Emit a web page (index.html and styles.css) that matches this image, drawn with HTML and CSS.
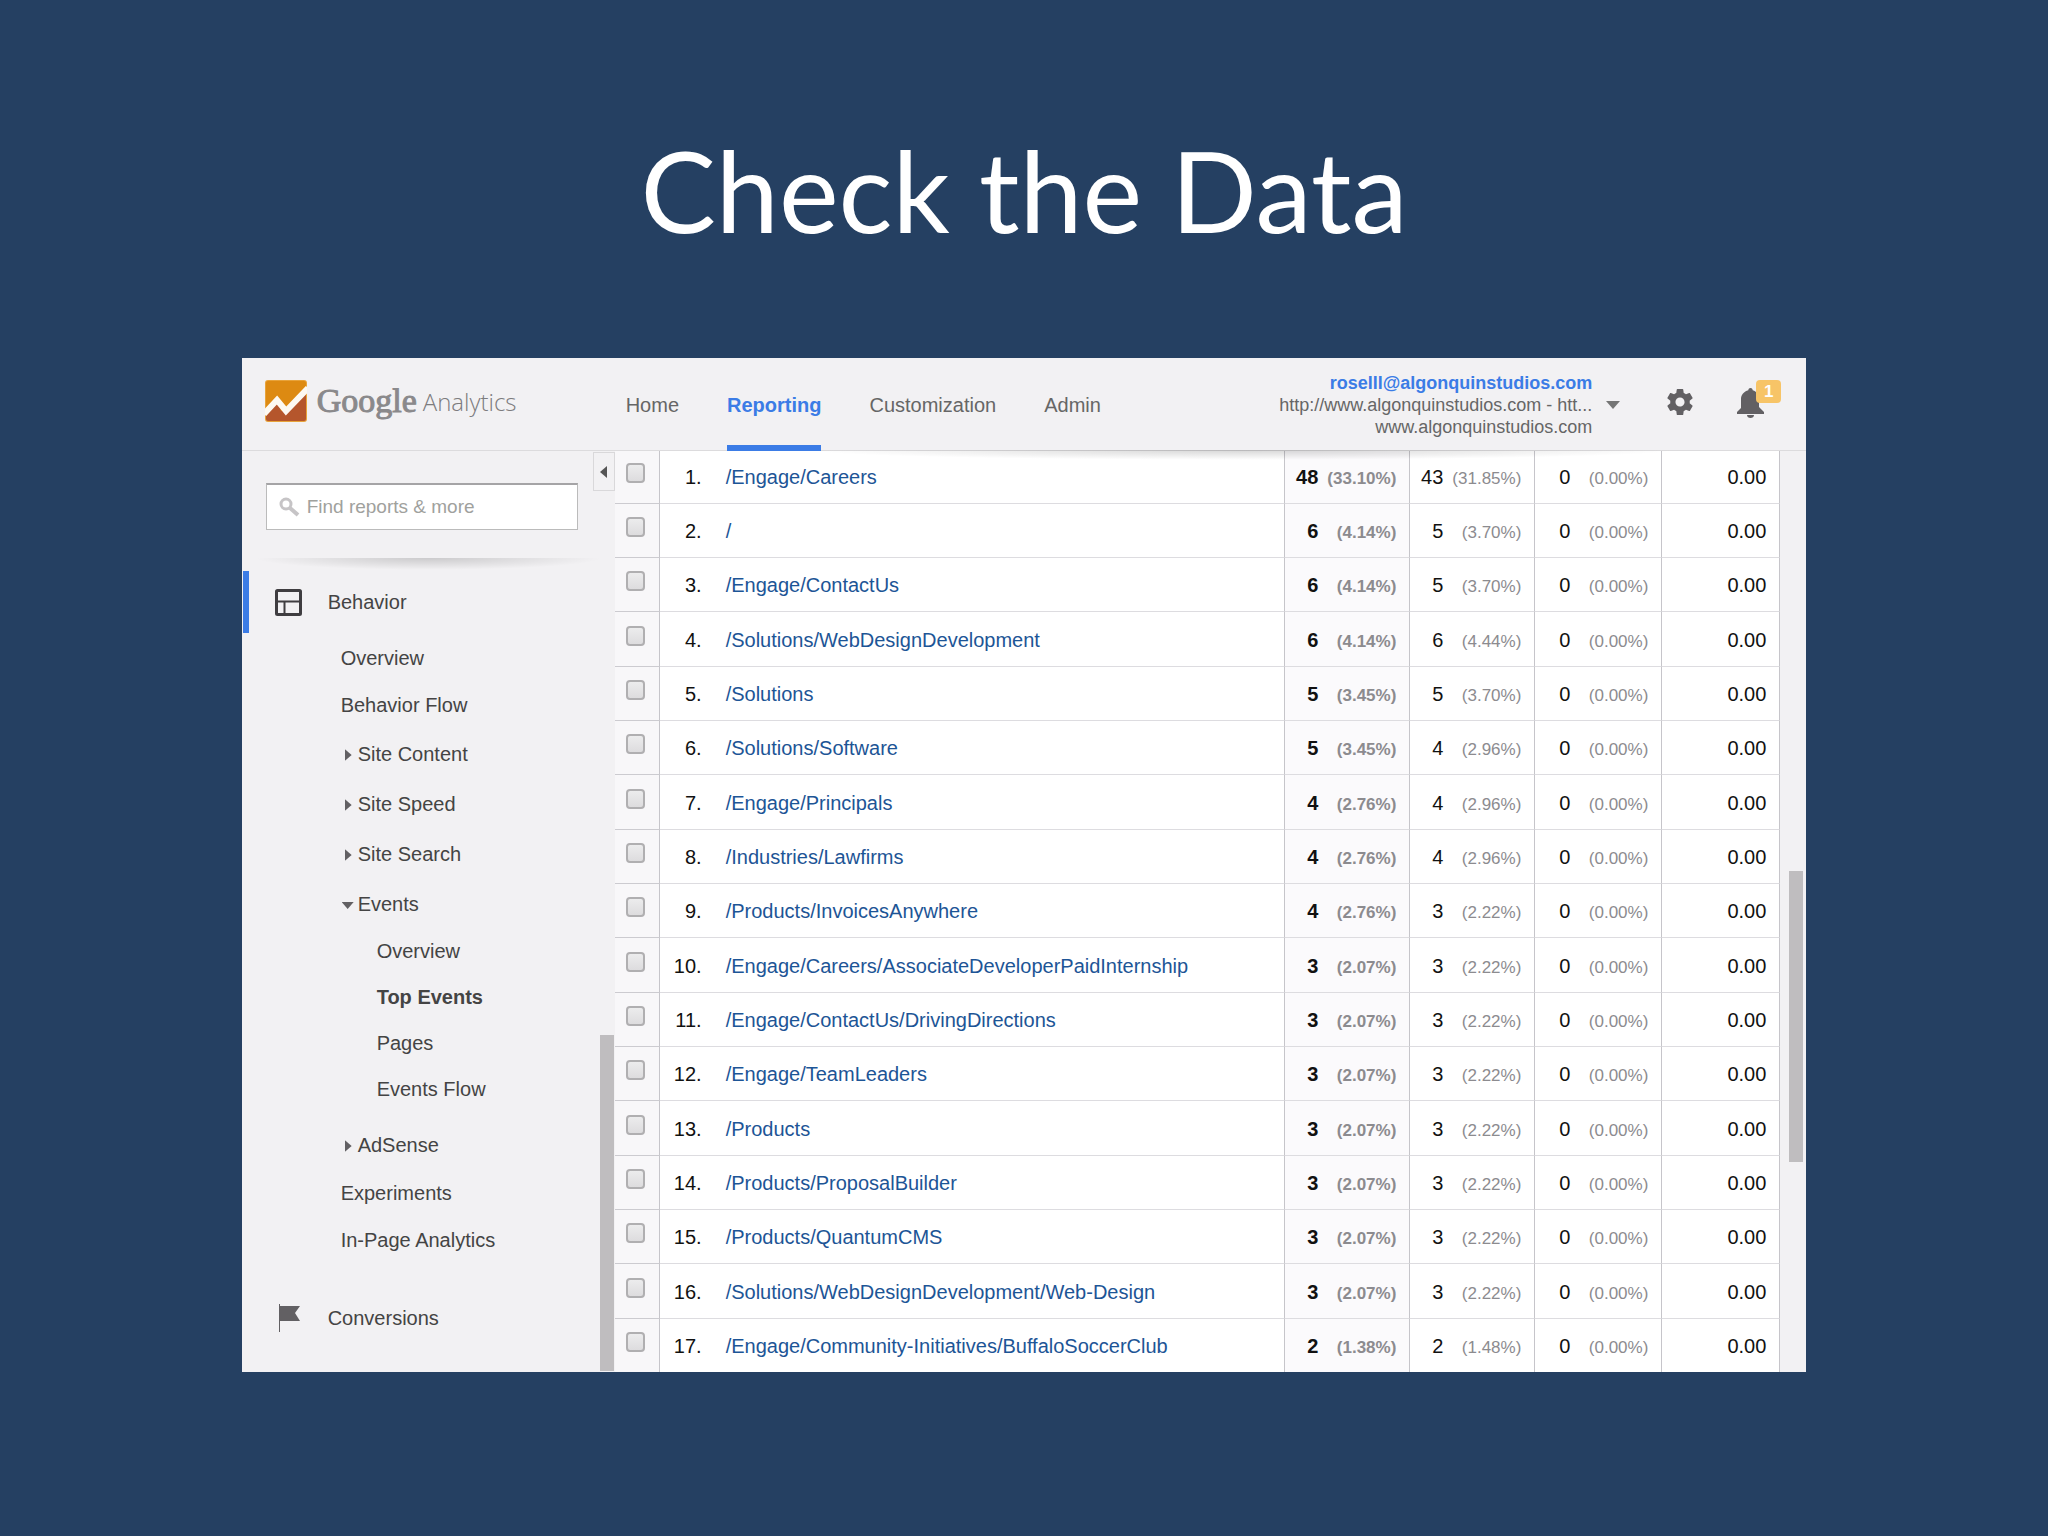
FILE: index.html
```html
<!DOCTYPE html>
<html lang="en">
<head>
<meta charset="UTF-8" />
<meta name="viewport" content="width=device-width, initial-scale=1" />
<title>Check the Data</title>
<link rel="stylesheet" href="styles.css">
</head>
<body>
  <main class="slide">
    <h1>Check the Data</h1>

    <div class="window">
      <header class="topbar">
        <a href="#" class="logo">
          <svg class="logo-mark" viewBox="0 0 42 42" aria-hidden="true">
            <rect width="42" height="42" rx="3" fill="#e8a33a"/>
            <path d="M1 3a2 2 0 0 1 2-2h36a2 2 0 0 1 2 2v36H1z" fill="#dd8a12"/>
            <path d="M1 36L12 22l9 11L41 13v26a2 2 0 0 1-2 2H3a2 2 0 0 1-2-2z" fill="#b5562c"/>
            <path d="M14 22l2 9 6-4z" fill="#e8940f"/>
            <path d="M-1 34L12 20l9 11L43 8" fill="none" stroke="#fdf9f2" stroke-width="6"/>
          </svg>
          <span class="logo-google">Google</span>
          <span class="logo-product">Analytics</span>
        </a>
        <nav class="tabs">
          <a href="#">Home</a>
          <a href="#" class="active">Reporting</a>
          <a href="#">Customization</a>
          <a href="#">Admin</a>
        </nav>
        <button type="button" class="account">
          <span class="account-text">
            <span class="email">roselll@algonquinstudios.com</span>
            <span>http://www.algonquinstudios.com - htt...</span>
            <span>www.algonquinstudios.com</span>
          </span>
          <svg class="caret" viewBox="0 0 14 8" aria-hidden="true"><path d="M0 0h14L7 8z" fill="#757575"/></svg>
        </button>
        <button type="button" class="icon-btn" aria-label="Settings">
          <svg width="26" height="26" viewBox="2 2 20 20" aria-hidden="true">
            <path fill="#626063" d="M19.43 12.98c.04-.32.07-.64.07-.98s-.03-.66-.07-.98l2.11-1.65c.19-.15.24-.42.12-.64l-2-3.46c-.12-.22-.39-.3-.61-.22l-2.49 1c-.52-.4-1.08-.73-1.69-.98l-.38-2.65C14.46 2.18 14.25 2 14 2h-4c-.25 0-.46.18-.49.42l-.38 2.65c-.61.25-1.17.59-1.69.98l-2.49-1c-.23-.09-.49 0-.61.22l-2 3.46c-.13.22-.07.49.12.64l2.11 1.65c-.04.32-.07.65-.07.98s.03.66.07.98l-2.11 1.65c-.19.15-.24.42-.12.64l2 3.46c.12.22.39.3.61.22l2.49-1c.52.4 1.08.73 1.69.98l.38 2.65c.03.24.24.42.49.42h4c.25 0 .46-.18.49-.42l.38-2.65c.61-.25 1.17-.59 1.69-.98l2.49 1c.23.09.49 0 .61-.22l2-3.46c.12-.22.07-.49-.12-.64l-2.11-1.65zM12 15.5c-1.93 0-3.5-1.57-3.5-3.5s1.57-3.5 3.5-3.5 3.5 1.57 3.5 3.5-1.57 3.5-3.5 3.5z"/>
          </svg>
        </button>
        <button type="button" class="icon-btn bell" aria-label="Notifications">
          <svg width="27" height="30" viewBox="0 0 27 30" aria-hidden="true">
            <path fill="#626063" d="M13.500 0c1.500 0 2.200 1 2.200 2.300 4 1.200 6.300 4.400 6.300 8.700v8l5 5v2H0v-2l4-4v-9c0-4.300 3-7.500 7.300-8.700C11.300 1 12 0 13.500 0zM10 27h7c0 2-1.500 3-3.500 3S10 29 10 27z"/>
          </svg>
          <span class="badge">1</span>
        </button>
      </header>

      <div class="content">
        <aside class="sidebar">
          <button type="button" class="collapse" aria-label="Collapse sidebar">
            <svg width="7" height="12" viewBox="0 0 7 12" aria-hidden="true"><path d="M7 0v12L0 6z" fill="#555"/></svg>
          </button>
          <label class="search">
            <svg width="21" height="20" viewBox="0 0 21 20" aria-hidden="true">
              <circle cx="7" cy="7" r="5" fill="none" stroke="#c6c4c6" stroke-width="3"/>
              <path d="M11 11l8 7" stroke="#c6c4c6" stroke-width="4"/>
            </svg>
            <input type="text" placeholder="Find reports &amp; more" aria-label="Find reports and more" />
          </label>
          <div class="divider"></div>

          <nav class="menu">
            <a href="#" class="section current">
              <svg width="27" height="27" viewBox="0 0 27 27" aria-hidden="true">
                <rect x="1.500" y="1.500" width="24" height="24" rx="1" fill="none" stroke="#3f3d40" stroke-width="3"/>
                <path d="M2 12.500h23M9.500 12v13" stroke="#3f3d40" stroke-width="2"/>
              </svg>
              Behavior
            </a>
            <ul>
              <li><a href="#">Overview</a></li>
              <li><a href="#">Behavior Flow</a></li>
              <li><a href="#" class="group">Site Content</a></li>
              <li><a href="#" class="group">Site Speed</a></li>
              <li><a href="#" class="group">Site Search</a></li>
              <li>
                <a href="#" class="group open">Events</a>
                <ul class="submenu">
                  <li><a href="#">Overview</a></li>
                  <li><a href="#" class="selected">Top Events</a></li>
                  <li><a href="#">Pages</a></li>
                  <li><a href="#">Events Flow</a></li>
                </ul>
              </li>
              <li><a href="#" class="group">AdSense</a></li>
              <li><a href="#">Experiments</a></li>
              <li><a href="#">In-Page Analytics</a></li>
            </ul>
            <a href="#" class="section">
              <svg width="27" height="28" viewBox="0 0 27 28" aria-hidden="true">
                <path d="M4.500 0v28" stroke="#626063"/>
                <path d="M4 2h21l-5 7 5 8H4z" fill="#626063"/>
              </svg>
              Conversions
            </a>
          </nav>
          <div class="thumb"></div>
        </aside>

        <div class="report">
          <table id="pagesTable">
            <colgroup>
              <col class="col-check">
              <col class="col-index">
              <col>
              <col class="col-total">
              <col class="col-unique">
              <col class="col-value">
              <col class="col-avg">
            </colgroup>
            <tbody>
              <!-- Populated by script.js -->
            </tbody>
          </table>
        </div>
        <div class="gutter"><div class="thumb"></div></div>
      </div>
    </div>
  </main>

<script src="script.js"></script>
</body>
</html>
```
FILE: styles.css
```css
body {
  margin: 0;
  background: #254062;
  font-family: "Liberation Sans", Arial, sans-serif;
  font-size: 20px;
  color: #111;
}
a { color: inherit; text-decoration: none; }
button {
  border: none;
  background: none;
  padding: 0;
  font: inherit;
  color: inherit;
  cursor: pointer;
}
ul { list-style: none; margin: 0; padding: 0; }
svg { display: block; flex-shrink: 0; }

.slide { padding: 122px 11.8%; }
h1 {
  margin: 0 0 102px;
  font-family: Lato, sans-serif;
  font-size: 113px;
  line-height: 134px;
  font-weight: 400;
  color: #fff;
  text-align: center;
}
.window {
  background: #f2f1f3;
  overflow: hidden;
}

/* top bar */
.topbar {
  position: relative;
  z-index: 1;
  display: flex;
  align-items: center;
  box-sizing: border-box;
  height: 93px;
  padding-right: 42px;
  background: #f2f1f3;
  border-bottom: 1px solid #dcdbdd;
}
.topbar::after {
  content: "";
  position: absolute;
  top: 100%;
  left: 36%;
  right: 8%;
  height: 10px;
  background: radial-gradient(ellipse at top, rgba(0, 0, 0, 0.16), transparent 70%);
  pointer-events: none;
}
.logo {
  display: flex;
  align-items: center;
  box-sizing: border-box;
  width: 384px;
  padding: 0 0 6px 23px;
  color: #8a898b;
}
.logo-mark { width: 42px; height: 42px; margin-right: 10px; }
.logo-google {
  font-family: "Liberation Serif", serif;
  font-size: 34px;
  -webkit-text-stroke: 1px #8a898b;
  margin-right: 6px;
}
.logo-product {
  font-family: "Open Sans", sans-serif;
  font-size: 24px;
  font-weight: 300;
  color: #7d7c7e;
}
.tabs {
  display: flex;
  align-self: stretch;
  gap: 48px;
  margin-right: auto;
  color: #666;
}
.tabs a {
  display: flex;
  align-items: center;
  padding-top: 8px;
  border-bottom: 6px solid transparent;
  margin-bottom: -1px;
}
.tabs .active {
  color: #3b7ce6;
  font-weight: bold;
  border-color: #3b7ce6;
}
.account {
  display: flex;
  align-items: center;
  gap: 14px;
  padding-top: 2px;
  font-size: 18px;
  line-height: 22px;
  color: #666;
  text-align: right;
}
.account-text { display: flex; flex-direction: column; }
.email { color: #3b7ce6; font-weight: bold; }
.caret { width: 14px; height: 8px; }
.icon-btn { margin: 0 0 5px 47px; }
.bell { position: relative; margin-left: 44px; margin-bottom: 2px; }
.badge {
  position: absolute;
  top: -8px;
  right: -17px;
  width: 25px;
  border-radius: 4px;
  background: #f7c467;
  color: #fff;
  font-size: 17px;
  line-height: 23px;
  font-weight: bold;
}

/* sidebar */
.content {
  display: flex;
  margin-top: -1px;
}
.sidebar {
  position: relative;
  flex: 0 0 373px;
  color: #444;
}
.collapse {
  position: absolute;
  top: 2px;
  right: 0;
  display: flex;
  align-items: center;
  justify-content: center;
  box-sizing: border-box;
  width: 22px;
  height: 39px;
  border: 1px solid #d9d8da;
}
.search {
  display: flex;
  align-items: center;
  gap: 7px;
  box-sizing: border-box;
  height: 47px;
  margin: 33px 37px 28px 24px;
  padding: 0 12px;
  background: #fff;
  border: 1px solid #bbb;
  border-top: 2px solid #a5a4a6;
}
.search input {
  flex: 1;
  min-width: 0;
  border: none;
  outline: none;
  padding: 0;
  background: none;
  font: inherit;
  font-size: 19px;
}
.search input::placeholder { color: #a0a19d; opacity: 1; }
.divider {
  height: 12px;
  margin: 0 12px;
  background: radial-gradient(ellipse at top, rgba(0, 0, 0, 0.16), transparent 70%);
}
.section {
  display: flex;
  align-items: center;
  gap: 26px;
  height: 62px;
  padding-left: 26px;
  margin: 23px 0 0 1px;
  border-left: 6px solid transparent;
}
.section.current {
  margin: 1px 0 2px 1px;
  border-color: #3b7ce6;
}
.menu li a {
  display: flex;
  align-items: center;
  line-height: 47px;
  padding-left: 99px;
}
.menu li .group {
  line-height: 50px;
  padding-left: 103px;
}
.group::before {
  content: "";
  width: 7px;
  height: 12px;
  margin-top: 2px;
  margin-right: 6px;
  background: #626063;
  clip-path: polygon(0 0, 100% 50%, 0 100%);
}
.group.open::before {
  width: 12px;
  height: 7px;
  margin: 3px 4px 0 -3px;
  clip-path: polygon(0 0, 100% 0, 50% 100%);
}
.menu .submenu { margin: -1px 0 8px; }
.menu .submenu a {
  line-height: 46px;
  padding-left: 135px;
}
.selected { font-weight: bold; }
.thumb {
  position: absolute;
  background: #bfbdbf;
}
.sidebar .thumb {
  right: 1px;
  bottom: 1px;
  width: 14px;
  height: 336px;
}

/* report table */
.report {
  flex: 1;
  min-width: 0;
  background: #fff;
}
.gutter {
  position: relative;
  flex: 0 0 26px;
}
.gutter .thumb {
  top: 421px;
  right: 3px;
  width: 14px;
  height: 291px;
}
table {
  width: 100%;
  table-layout: fixed;
  border-collapse: separate;
  border-spacing: 0;
}
.col-check { width: 45px; }
.col-index { width: 42px; }
.col-total, .col-unique { width: 125px; }
.col-value { width: 127px; }
.col-avg { width: 118px; }
td {
  box-sizing: border-box;
  height: 54px;
  padding: 2px 13px 0 0;
  border-bottom: 1px solid #dddce0;
  border-right: 1px solid #c6c5ca;
  text-align: right;
  white-space: nowrap;
}
/* every third row takes the extra pixel */
tr:nth-child(3n+4) td { height: 55px; }
tr:last-child td { height: 53px; border-bottom: none; }
td.check {
  padding: 0 0 7px 11px;
  background: #f8f7f9;
  border-bottom-color: #cccbd0;
  text-align: left;
}
td.index { padding-right: 0; border-right: none; }
td.page {
  padding-left: 24px;
  text-align: left;
  color: #1d5596;
}
td.total { background: #fbfafc; font-weight: bold; }
.pct {
  display: inline-block;
  width: 78px;
  font-size: 17px;
  color: #8c8b8f;
}
input[type="checkbox"] {
  appearance: none;
  display: block;
  width: 19px;
  height: 20px;
  margin: 0;
  border: 2px solid #b0afb1;
  border-radius: 4px;
  background: linear-gradient(#ececed, #dddcde);
}
```
FILE: script.js
```js
const rows = [
  ["/Engage/Careers", 48, "33.10", 43, "31.85"],
  ["/", 6, "4.14", 5, "3.70"],
  ["/Engage/ContactUs", 6, "4.14", 5, "3.70"],
  ["/Solutions/WebDesignDevelopment", 6, "4.14", 6, "4.44"],
  ["/Solutions", 5, "3.45", 5, "3.70"],
  ["/Solutions/Software", 5, "3.45", 4, "2.96"],
  ["/Engage/Principals", 4, "2.76", 4, "2.96"],
  ["/Industries/Lawfirms", 4, "2.76", 4, "2.96"],
  ["/Products/InvoicesAnywhere", 4, "2.76", 3, "2.22"],
  ["/Engage/Careers/AssociateDeveloperPaidInternship", 3, "2.07", 3, "2.22"],
  ["/Engage/ContactUs/DrivingDirections", 3, "2.07", 3, "2.22"],
  ["/Engage/TeamLeaders", 3, "2.07", 3, "2.22"],
  ["/Products", 3, "2.07", 3, "2.22"],
  ["/Products/ProposalBuilder", 3, "2.07", 3, "2.22"],
  ["/Products/QuantumCMS", 3, "2.07", 3, "2.22"],
  ["/Solutions/WebDesignDevelopment/Web-Design", 3, "2.07", 3, "2.22"],
  ["/Engage/Community-Initiatives/BuffaloSoccerClub", 2, "1.38", 2, "1.48"]
];

const tableBody = document.querySelector("#pagesTable tbody");

tableBody.innerHTML = rows.map(([page, total, totalPct, unique, uniquePct], i) => `
  <tr>
    <td class="check"><input type="checkbox" aria-label="Select ${page}" /></td>
    <td class="index">${i + 1}.</td>
    <td class="page"><a href="#">${page}</a></td>
    <td class="total">${total}<span class="pct">(${totalPct}%)</span></td>
    <td>${unique}<span class="pct">(${uniquePct}%)</span></td>
    <td>0<span class="pct">(0.00%)</span></td>
    <td>0.00</td>
  </tr>
`).join("");
```
